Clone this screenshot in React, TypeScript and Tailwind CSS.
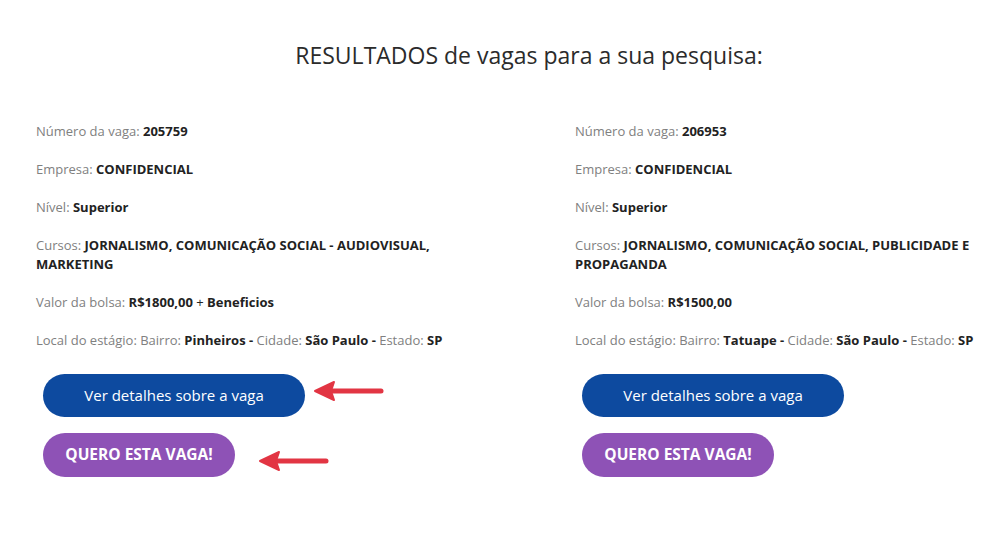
import type { ReactNode } from 'react'

interface Vaga {
  numero: string
  curso: string
  valor: ReactNode
  bairro: string
}

const vagas: Vaga[] = [
  {
    numero: '205759',
    curso: 'JORNALISMO, COMUNICAÇÃO SOCIAL - AUDIOVISUAL, MARKETING',
    valor: (
      <>
        R$1800,00 <span className="font-normal">+</span> Beneficios
      </>
    ),
    bairro: 'Pinheiros',
  },
  {
    numero: '206953',
    curso: 'JORNALISMO, COMUNICAÇÃO SOCIAL, PUBLICIDADE E PROPAGANDA',
    valor: 'R$1500,00',
    bairro: 'Tatuape',
  },
]

function Arrow({ className }: { className: string }) {
  return (
    <svg className={className} width="72" height="24" viewBox="0 0 72 24" fill="none">
      <path d="M20 12 H68" stroke="#e23543" strokeWidth="5" strokeLinecap="round" />
      <path d="M2 12 L21 3 L18 12 L21 21 Z" fill="#e23543" stroke="#e23543" strokeWidth="2" strokeLinejoin="round" />
    </svg>
  )
}

function Field({ label, children }: { label: string; children: ReactNode }) {
  return (
    <p className="mb-[19px] leading-[19px]">
      <span className="text-[#808080]">{label}: </span>
      <span className="font-bold text-[#222]">{children}</span>
    </p>
  )
}

function VagaCard({ vaga, arrows }: { vaga: Vaga; arrows?: boolean }) {
  return (
    <div className="relative w-[425px]">
      <Field label="Número da vaga">{vaga.numero}</Field>
      <Field label="Empresa">CONFIDENCIAL</Field>
      <Field label="Nível">Superior</Field>
      <Field label="Cursos">{vaga.curso}</Field>
      <Field label="Valor da bolsa">{vaga.valor}</Field>
      <p className="leading-[19px] whitespace-nowrap">
        <span className="text-[#808080]">Local do estágio: Bairro: </span>
        <span className="font-bold text-[#222]">{vaga.bairro} - </span>
        <span className="text-[#808080]">Cidade: </span>
        <span className="font-bold text-[#222]">São Paulo - </span>
        <span className="text-[#808080]">Estado: </span>
        <span className="font-bold text-[#222]">SP</span>
      </p>
      <div className="mt-[24px] ml-[7px] flex flex-col items-start gap-[16px]">
        <button className="w-[262px] h-[43px] rounded-full bg-[#0d4a9f] text-white text-[15px]">
          Ver detalhes sobre a vaga
        </button>
        <button className="w-[192px] h-[44px] rounded-full bg-[#8e52b6] text-white text-[15.5px] font-bold">
          QUERO ESTA VAGA!
        </button>
      </div>
      {arrows && (
        <>
          <Arrow className="absolute left-[277px] top-[257px]" />
          <Arrow className="absolute left-[222px] top-[327px]" />
        </>
      )}
    </div>
  )
}

export default function App() {
  return (
    <div className="w-[984px] h-[552px] overflow-hidden bg-white font-['Open_Sans',sans-serif] text-[13px]">
      <h1 className="pt-[38px] pl-[74px] text-center text-[23px] leading-[34px] text-[#2b2b2b]">
        RESULTADOS de vagas para a sua pesquisa:
      </h1>
      <div className="mt-[50px] pl-[36px] grid grid-cols-[539px_425px]">
        <VagaCard vaga={vagas[0]} arrows />
        <VagaCard vaga={vagas[1]} />
      </div>
    </div>
  )
}
